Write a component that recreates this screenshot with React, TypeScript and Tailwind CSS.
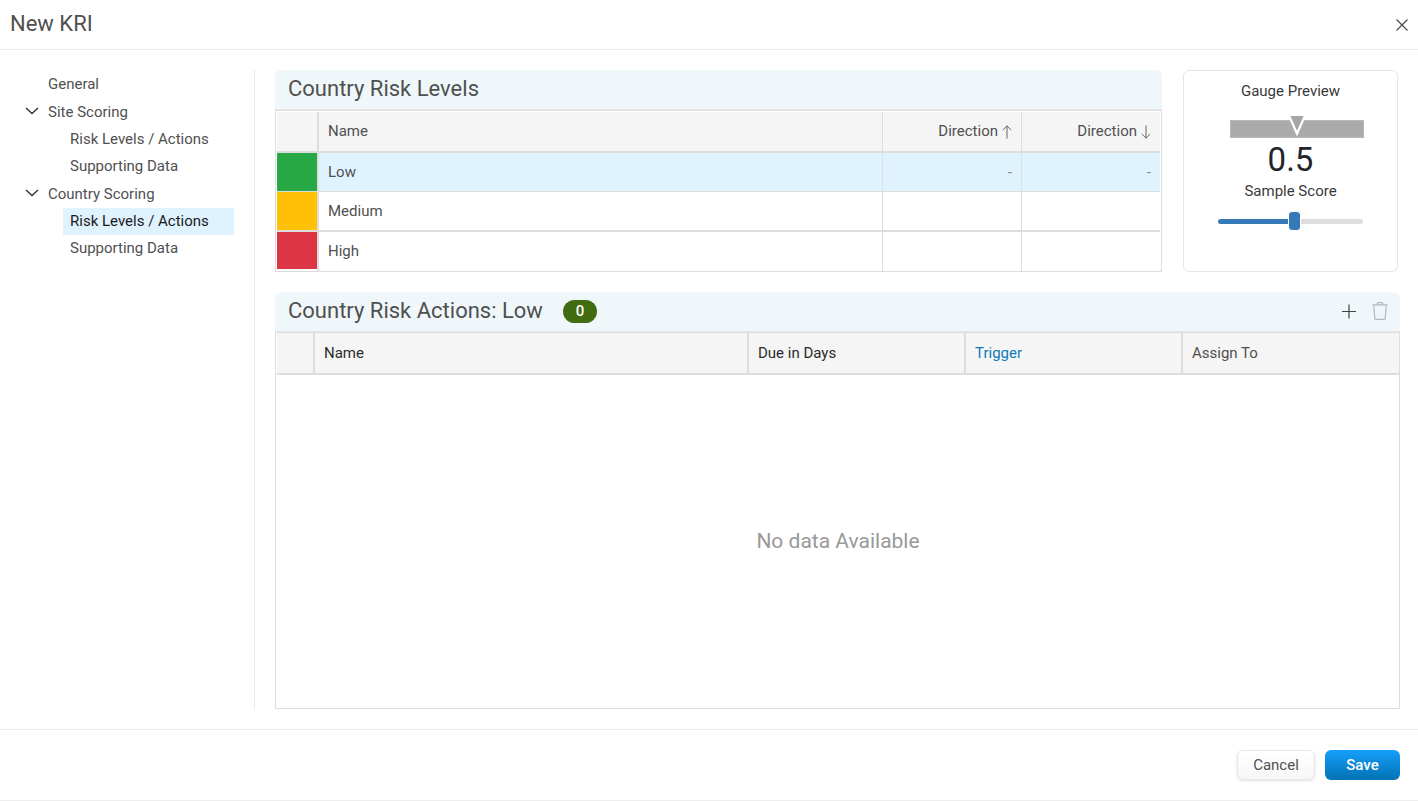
import { useState } from "react";

const levels = [
  { name: "Low", color: "bg-[#28a745]", line: "border-b", cell: "h-[39px]" },
  { name: "Medium", color: "bg-[#ffc107]", line: "border-b-2", cell: "h-10" },
  { name: "High", color: "bg-[#dc3545]", line: "border-b-0", cell: "h-[39px]" },
];

function Chevron({ open }: { open: boolean }) {
  return (
    <svg
      width="14"
      height="8"
      viewBox="0 0 14 8"
      fill="none"
      stroke="#333"
      strokeWidth="1.4"
      className={open ? "mb-1" : "mb-1 -rotate-90"}
    >
      <path d="M1 1l6 5.6L13 1" />
    </svg>
  );
}

function Arrow({ down = false }: { down?: boolean }) {
  return (
    <svg
      width="10"
      height="14"
      viewBox="0 0 10 14"
      fill="none"
      stroke="#666"
      strokeWidth="1"
      className={down ? "rotate-180" : ""}
    >
      <path d="M5 .7v12.8M.8 5L5 .9 9.2 5" />
    </svg>
  );
}

function NavGroup({ label, active }: { label: string; active?: string }) {
  const [open, setOpen] = useState(true);

  return (
    <li>
      <button
        type="button"
        aria-expanded={open}
        onClick={() => setOpen(!open)}
        className="flex h-[27px] items-center gap-[9px] pl-[25px]"
      >
        <Chevron open={open} />
        {label}
      </button>
      {open && (
        <ul className="pl-[63px]">
          {["Risk Levels / Actions", "Supporting Data"].map((item) => (
            <li key={item}>
              <a
                href="#"
                className={
                  item === active
                    ? "block bg-[#dff3ff] pl-[7px] leading-[27px] text-[#1a1a1a]"
                    : "block pl-[7px] leading-[27px]"
                }
              >
                {item}
              </a>
            </li>
          ))}
        </ul>
      )}
    </li>
  );
}

function RiskLevels() {
  const [selected, setSelected] = useState("Low");

  return (
    <section className="flex-1">
      <div className="h-10 rounded-t-md border-b border-[#e6e6e6] bg-[#eff7fb] pl-[13px]">
        <h2 className="text-[22px] leading-[38px]">Country Risk Levels</h2>
      </div>
      <div className="border border-[#ddd] px-px pt-px">
        <table className="w-full table-fixed border-separate border-spacing-0">
          <thead>
            <tr className="h-[41px] bg-[#f5f5f5]">
              <th className="w-[42px] border-r-2 border-b-2 border-[#ddd]"></th>
              <th className="border-b-2 border-[#ddd] pl-[9px] text-left font-normal">
                Name
              </th>
              <th className="w-[139px] border-b-2 border-l border-[#ddd] pr-[9px] font-normal">
                <span className="flex items-center justify-end gap-1">
                  Direction <Arrow />
                </span>
              </th>
              <th className="w-[139px] border-b-2 border-l border-[#ddd] pr-[9px] font-normal">
                <span className="flex items-center justify-end gap-1">
                  Direction <Arrow down />
                </span>
              </th>
            </tr>
          </thead>
          <tbody>
            {levels.map((level) => {
              const on = level.name === selected;
              const line = `${level.line} ${level.cell} border-[#ddd]`;
              return (
                <tr
                  key={level.name}
                  onClick={() => setSelected(level.name)}
                  className={on ? "bg-[#dff3ff]" : "bg-white"}
                >
                  <td className={`${line} border-r-2 bg-white`}>
                    <div
                      className={`${level.color} ${level.name === "High" ? "h-[37px] mb-[2px]" : "h-[38px]"}`}
                    ></div>
                  </td>
                  <td className={`${line} pl-[9px]`}>{level.name}</td>
                  <td className={`${line} border-l pr-[9px] text-right text-[#888]`}>
                    {on && "-"}
                  </td>
                  <td className={`${line} border-l pr-[9px] text-right text-[#888]`}>
                    {on && "-"}
                  </td>
                </tr>
              );
            })}
          </tbody>
        </table>
      </div>
    </section>
  );
}

function GaugePreview() {
  const [score, setScore] = useState(0.53);

  return (
    <section className="mr-[2px] flex w-[215px] flex-col items-center rounded-md border border-[#e6e6e6] pt-[10px] text-[#3a3a3a]">
      <h3 className="leading-5">Gauge Preview</h3>
      <svg width="134" height="22" viewBox="0 0 134 22" className="mt-[15px] ml-3">
        <rect x=".5" y="4.5" width="133" height="17" fill="#aaa" stroke="#b8b8b8" />
        <path d="M58 0L67 20.5 76 0z" fill="#fff" />
        <path d="M60.4 0L67 14.8 73.6 0z" fill="#a6a6a6" />
      </svg>
      <p className="mt-1 text-[33px] leading-9 text-[#212529]">{score.toFixed(1)}</p>
      <label htmlFor="score" className="mt-[3px] leading-5">
        Sample Score
      </label>
      <input
        id="score"
        type="range"
        min="0"
        max="1"
        step="0.01"
        value={score}
        onChange={(e) => setScore(Number(e.target.value))}
        className="mt-[10px] h-5 w-[145px] appearance-none bg-transparent [&::-webkit-slider-runnable-track]:h-[5px] [&::-webkit-slider-runnable-track]:rounded-full [&::-webkit-slider-runnable-track]:bg-[linear-gradient(to_right,#337ab7_var(--fill),#ddd_var(--fill))] [&::-webkit-slider-thumb]:-mt-[8px] [&::-webkit-slider-thumb]:h-5 [&::-webkit-slider-thumb]:w-[13px] [&::-webkit-slider-thumb]:appearance-none [&::-webkit-slider-thumb]:rounded-[4px] [&::-webkit-slider-thumb]:border [&::-webkit-slider-thumb]:border-white [&::-webkit-slider-thumb]:bg-[#337ab7]"
        style={{ "--fill": `${score * 100}%` } as React.CSSProperties}
      />
    </section>
  );
}

function RiskActions() {
  return (
    <section className="flex flex-1 flex-col">
      <div className="flex h-10 items-start rounded-t-md border-b border-[#e6e6e6] bg-[#eff7fb] pr-3 pl-[13px]">
        <h2 className="text-[22px] leading-[38px]">Country Risk Actions: Low</h2>
        <span className="mt-2 ml-5 w-[34px] rounded-full bg-[#426c10] text-center font-medium leading-[23px] text-white">
          0
        </span>
        <div className="mt-[10px] ml-auto flex items-center gap-[15px]">
          <button type="button" aria-label="Add action">
            <svg width="16" height="18" viewBox="0 0 16 18" stroke="#444" strokeWidth="1.2">
              <path d="M1 9.5h14M8 2.5v14" />
            </svg>
          </button>
          <button type="button" aria-label="Delete action" disabled>
            <svg
              width="16"
              height="18"
              viewBox="0 0 16 18"
              fill="none"
              stroke="#b5b9bb"
              strokeWidth="1.2"
            >
              <path d="M.4 2.9h15.2M4.8 2.9l.9-2.2h4.6l.9 2.2M1.8 3l1 13.4q.1 1 1 1h8.4q.9 0 1-1l1-13.4" />
            </svg>
          </button>
        </div>
      </div>
      <div className="flex flex-1 flex-col border border-[#ddd] pl-px">
        <table className="w-full table-fixed border-separate border-spacing-0">
          <thead>
            <tr className="h-[42px] bg-[#f5f5f5] text-left text-[#2b2b2b]">
              <th className="w-[38px] border-r-2 border-b-2 border-[#ddd]"></th>
              <th className="border-r-2 border-b-2 border-[#ddd] pl-[9px] font-normal">
                Name
              </th>
              <th className="w-[217px] border-r-2 border-b-2 border-[#ddd] pl-[9px] font-normal">
                Due in Days
              </th>
              <th className="w-[217px] border-r-2 border-b-2 border-[#ddd] pl-[9px] font-normal text-[#0b7ab8]">
                Trigger
              </th>
              <th className="w-[216px] border-b-2 border-[#ddd] pl-[9px] font-normal text-[#505050]">
                Assign To
              </th>
            </tr>
          </thead>
        </table>
        <p className="flex flex-1 items-center justify-center text-[21px] text-[#999]">
          No data Available
        </p>
      </div>
    </section>
  );
}

export default function App() {
  return (
    <div className="flex min-h-screen flex-col border-b border-[#eee] bg-white font-['Roboto',sans-serif] text-[15px] text-[#505050]">
      <header className="flex h-[50px] items-center justify-between border-b border-[#eaeaea] px-[10px]">
        <h1 className="pb-[2px] text-[22px] leading-8">New KRI</h1>
        <button type="button" aria-label="Close">
          <svg width="12" height="12" viewBox="0 0 12 12" stroke="#444" strokeWidth="1.1">
            <path d="M.5.5l11 11M11.5.5l-11 11" />
          </svg>
        </button>
      </header>

      <main className="flex flex-1 py-5 pr-[18px]">
        <nav className="w-[255px] border-r border-[#eaeaea] pt-px pr-5">
          <ul className="flex flex-col gap-px">
            <li>
              <a href="#" className="block pl-12 leading-[27px]">
                General
              </a>
            </li>
            <NavGroup label="Site Scoring" />
            <NavGroup label="Country Scoring" active="Risk Levels / Actions" />
          </ul>
        </nav>
        <div className="flex flex-1 flex-col gap-5 pl-5">
          <div className="flex gap-[21px]">
            <RiskLevels />
            <GaugePreview />
          </div>
          <RiskActions />
        </div>
      </main>

      <footer className="flex justify-end gap-[10px] border-t border-[#eaeaea] py-5 pr-[18px]">
        <button
          type="button"
          className="h-[30px] w-[78px] rounded-md border border-[#e8e8e8] bg-linear-to-b from-white to-[#f7f7f7] shadow-sm"
        >
          Cancel
        </button>
        <button
          type="button"
          className="h-[30px] w-[75px] rounded-md bg-linear-to-b from-[#169ffb] to-[#0272b4] font-medium text-white"
        >
          Save
        </button>
      </footer>
    </div>
  );
}
